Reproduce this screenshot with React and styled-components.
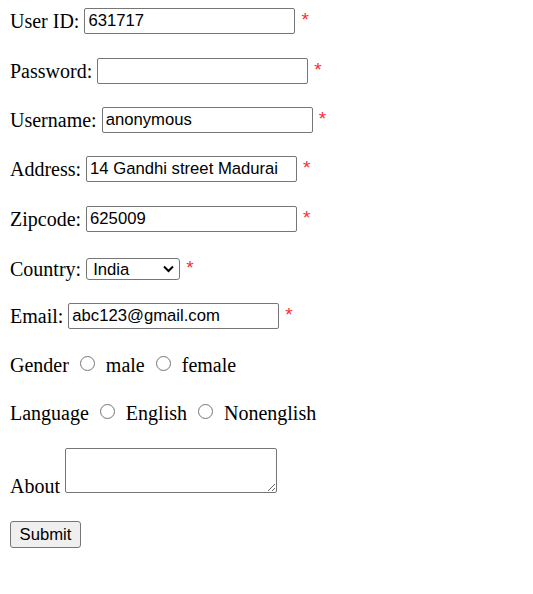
import React from 'react';
import styled, { createGlobalStyle } from 'styled-components';

const GlobalStyle = createGlobalStyle`
  body {
    margin: 0;
    background: #fff;
    color: #000;
    font-family: "Liberation Serif", "Times New Roman", serif;
    font-size: 20px;
  }
`

const Form = styled.form`
  display: flex;
  flex-direction: column;
  align-items: flex-start;
  padding: 8px 10px;
`
const Row = styled.div`
  display: flex;
  align-items: ${p => p.$align || 'center'};
  gap: 5px;
  min-height: 26px;
  margin-top: ${p => (p.$space === undefined ? 23 : p.$space)}px;
  &:first-child {
    margin-top: 0;
  }
`
const Label = styled.label`
  line-height: 23px;
  white-space: nowrap;
`
const AboutLabel = styled(Label)`
  margin-bottom: -5px;
`
const Input = styled.input`
  box-sizing: border-box;
  width: 211px;
  height: 26px;
  padding: 1px 3px;
  border: 1px solid #767676;
  border-radius: 2px;
  background: #fff;
  font-family: "Liberation Sans", Arial, sans-serif;
  font-size: 16.67px;
  color: #000;
  outline: none;
`
const Required = styled.span`
  align-self: flex-start;
  margin: 2px 0 0 1px;
  color: #ff2a3a;
  font-family: "Liberation Sans", Arial, sans-serif;
  font-size: 19px;
  line-height: 19px;
`
const SelectWrap = styled.span`
  position: relative;
  display: inline-flex;
`
const Select = styled.select`
  box-sizing: border-box;
  width: 94px;
  height: 22px;
  padding: 0 0 0 6px;
  border: 1px solid #767676;
  border-radius: 3px;
  background: #fff;
  appearance: none;
  font-family: "Liberation Sans", Arial, sans-serif;
  font-size: 16.67px;
  color: #000;
  outline: none;
`
const Chevron = styled.svg`
  position: absolute;
  right: 6px;
  top: 7px;
  pointer-events: none;
`
const Radio = styled.input`
  box-sizing: border-box;
  appearance: none;
  width: 15px;
  height: 15px;
  margin: 0 6px 3px 6px;
  border: 1px solid #767676;
  border-radius: 50%;
  background: #fff;
`
const TextArea = styled.textarea`
  box-sizing: border-box;
  width: 212px;
  height: 45px;
  padding: 2px 3px;
  border: 1px solid #767676;
  border-radius: 2px;
  font-family: "Liberation Mono", monospace;
  font-size: 16px;
  outline: none;
`
const Button = styled.button`
  box-sizing: border-box;
  width: 71px;
  height: 27px;
  padding: 0;
  border: 1px solid #767676;
  border-radius: 3px;
  background: #efefef;
  color: #000;
  font-family: "Liberation Sans", Arial, sans-serif;
  font-size: 16.67px;
`

const fields = [
  { label: 'User ID:', value: '631717', space: 0 },
  { label: 'Password:', value: '', type: 'password', space: 24 },
  { label: 'Username:', value: 'anonymous', space: 23 },
  { label: 'Address:', value: '14 Gandhi street Madurai', space: 23 },
  { label: 'Zipcode:', value: '625009', space: 24 },
]

const App = () => {
  return (
    <>
      <GlobalStyle />
      <Form onSubmit={e => e.preventDefault()}>
        {fields.map(f => (
          <Row key={f.label} $space={f.space}>
            <Label>{f.label}</Label>
            <Input type={f.type || 'text'} defaultValue={f.value} />
            <Required>*</Required>
          </Row>
        ))}
        <Row $space={24}>
          <Label>Country:</Label>
          <SelectWrap>
            <Select defaultValue="India">
              <option>India</option>
              <option>USA</option>
              <option>UK</option>
            </Select>
            <Chevron width="11" height="8" viewBox="0 0 11 8">
              <path d="M1 1.5 L5.5 6 L10 1.5" fill="none" stroke="#000" strokeWidth="2" />
            </Chevron>
          </SelectWrap>
          <Required>*</Required>
        </Row>
        <Row $space={21}>
          <Label>Email:</Label>
          <Input type="text" defaultValue="abc123@gmail.com" />
          <Required>*</Required>
        </Row>
        <Row $space={23}>
          <Label>Gender</Label>
          <Radio type="radio" name="gender" />
          <Label>male</Label>
          <Radio type="radio" name="gender" />
          <Label>female</Label>
        </Row>
        <Row $space={22}>
          <Label>Language</Label>
          <Radio type="radio" name="lang" />
          <Label>English</Label>
          <Radio type="radio" name="lang" />
          <Label>Nonenglish</Label>
        </Row>
        <Row $space={22} $align="flex-end">
          <AboutLabel>About</AboutLabel>
          <TextArea />
        </Row>
        <Row $space={28}>
          <Button type="submit">Submit</Button>
        </Row>
      </Form>
    </>
  );
}

export default App;
